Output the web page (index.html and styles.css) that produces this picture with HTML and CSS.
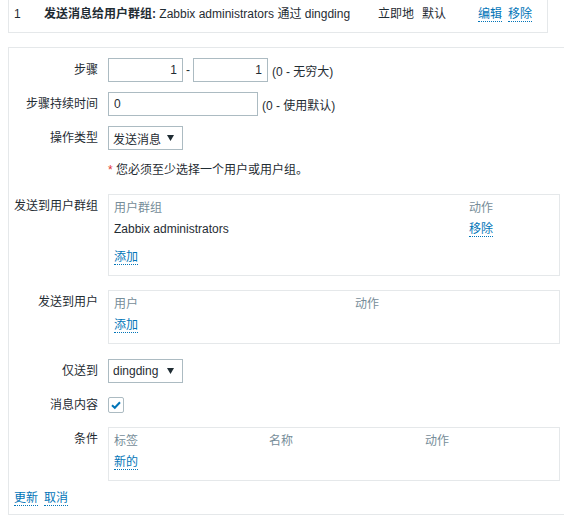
FILE: index.html
```html
<!DOCTYPE html>
<html>
<head>
<meta charset="utf-8">
<link rel="stylesheet" href="styles.css">
</head>
<body>
<div class="ops">
  <span>1</span>
  <span><b>发送消息给用户群组:</b> Zabbix administrators 通过 dingding</span>
  <span>立即地</span>
  <span>默认</span>
  <span class="acts"><a class="link">编辑</a><a class="link">移除</a></span>
</div>

<div class="form">
  <div class="lbl">步骤</div>
  <div class="fld row">
    <input class="txt num" value="1">
    <span>-</span>
    <input class="txt num" value="1">
    <span>(0 - 无穷大)</span>
  </div>

  <div class="lbl">步骤持续时间</div>
  <div class="fld row">
    <input class="txt wide" value="0">
    <span>(0 - 使用默认)</span>
  </div>

  <div class="lbl">操作类型</div>
  <div class="fld">
    <div class="sel"><span>发送消息</span><svg width="7" height="6" viewBox="0 0 7 6"><path d="M0 0H7L3.5 6Z" fill="#1f2c33"/></svg></div>
  </div>

  <div class="lbl"></div>
  <div class="fld note"><span class="req">*</span> 您必须至少选择一个用户或用户组。</div>

  <div class="lbl">发送到用户群组</div>
  <div class="fld">
    <div class="tbox grp mb4">
      <div class="th">用户群组</div><div class="th">动作</div>
      <div>Zabbix administrators</div><div><a class="link">移除</a></div>
      <div class="add"><a class="link">添加</a></div>
    </div>
  </div>

  <div class="lbl">发送到用户</div>
  <div class="fld">
    <div class="tbox usr mb5">
      <div class="th">用户</div><div class="th">动作</div>
      <div><a class="link">添加</a></div>
    </div>
  </div>

  <div class="lbl">仅送到</div>
  <div class="fld">
    <div class="sel"><span>dingding</span><svg width="7" height="6" viewBox="0 0 7 6"><path d="M0 0H7L3.5 6Z" fill="#1f2c33"/></svg></div>
  </div>

  <div class="lbl">消息内容</div>
  <div class="fld chkrow">
    <div class="chk"><svg width="14" height="14" viewBox="0 0 14 14"><path d="M3 7.2L5.8 9.8L11 4.2" fill="none" stroke="#0275b8" stroke-width="2"/></svg></div>
  </div>

  <div class="lbl">条件</div>
  <div class="fld">
    <div class="tbox cond">
      <div class="th">标签</div><div class="th">名称</div><div class="th">动作</div>
      <div><a class="link">新的</a></div>
    </div>
  </div>

  <div class="btns"><a class="link">更新</a><a class="link">取消</a></div>
</div>
</body>
</html>
```

FILE: styles.css
```css
html, body {
  margin: 0;
  overflow: hidden;
  background: #ffffff;
}
body {
  font-family: "Liberation Sans", Arial, "Noto Sans CJK SC", sans-serif;
  font-size: 12px;
  color: #1f2c33;
}
.link {
  color: #0275b8;
  text-decoration: none;
  border-bottom: 1px dotted #0275b8;
  cursor: pointer;
}

.ops {
  margin-left: 8px;
  width: 540px;
  box-sizing: border-box;
  border: 1px solid #e5e8ea;
  border-top: 0;
  padding: 7px 0 10px 5px;
  line-height: 14px;
  display: grid;
  grid-template-columns: 30px 334px 44px 56px auto;
}
.ops b { font-weight: bold; }
.acts { display: flex; gap: 6px; }

.form {
  margin: 14px 0 0 8px;
  width: 557px;
  box-sizing: border-box;
  border: 1px solid #e5e8ea;
  padding: 10px 0 8px 0;
  display: grid;
  grid-template-columns: 89px 452px;
  column-gap: 10px;
  row-gap: 10px;
  align-items: start;
}
.lbl {
  text-align: right;
  line-height: 24px;
  white-space: nowrap;
}
.row {
  display: flex;
  align-items: center;
  gap: 3px;
  height: 24px;
}
.txt {
  font: inherit;
  color: #1f2c33;
  height: 24px;
  box-sizing: border-box;
  border: 1px solid #acbbc2;
  padding: 0 5px;
  margin: 0;
  outline: none;
  background: #fff;
}
.num { width: 75px; text-align: right; }
.wide { width: 150px; }
.row span:last-child { margin-left: 1px; }

.sel {
  width: 75px;
  height: 24px;
  box-sizing: border-box;
  border: 1px solid #acbbc2;
  display: flex;
  align-items: center;
  justify-content: space-between;
  padding: 0 8px 0 4px;
}
.sel svg { display: block; }

.note {
  line-height: 20px;
  margin-bottom: 4px;
}
.req { color: #e33734; }

.tbox {
  border: 1px solid #e5e8ea;
  padding: 3px 6px 7px 5px;
  display: grid;
  line-height: 21px;
}
.th { color: #768d99; }
.grp { grid-template-columns: 355px auto; }
.usr { grid-template-columns: 241px auto; }
.cond { grid-template-columns: 155px 156px auto; }
.add { margin-top: 7px; }
.mb4 { margin-bottom: 4px; }
.mb5 { margin-bottom: 5px; }

.chkrow {
  height: 24px;
  display: flex;
  align-items: center;
}
.chk {
  width: 16px;
  height: 16px;
  box-sizing: border-box;
  border: 1px solid #acbbc2;
  border-radius: 2px;
  display: flex;
  align-items: center;
  justify-content: center;
}
.chk svg { display: block; }

.btns {
  grid-column: 1 / -1;
  padding-left: 5px;
  line-height: 14px;
  display: flex;
  gap: 6px;
}
```
